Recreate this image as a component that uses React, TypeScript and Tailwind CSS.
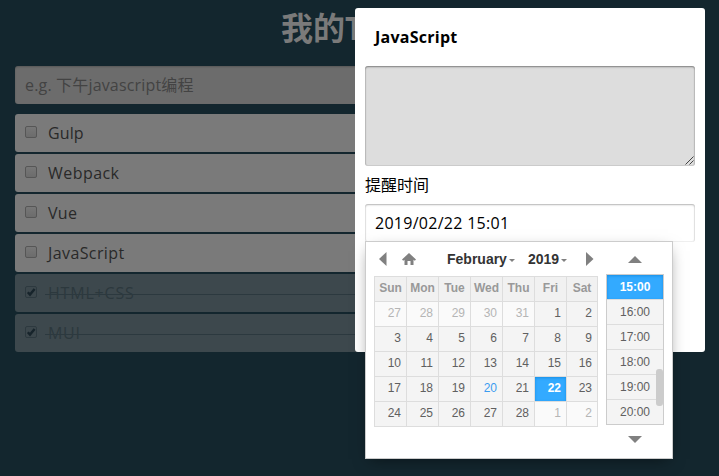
import React from "react";

const sans = "font-['Open_Sans','Noto_Sans_CJK_SC',sans-serif]";
const arial = "font-['Liberation_Sans',Arial,sans-serif]";

const todos = [
  { title: "Gulp", done: false, tracking: "tracking-[0.1px]" },
  { title: "Webpack", done: false, tracking: "tracking-[0.45px]" },
  { title: "Vue", done: false, tracking: "tracking-[0.3px]" },
  { title: "JavaScript", done: false, tracking: "tracking-[0.4px]" },
  { title: "HTML+CSS", done: true, tracking: "tracking-[0.8px]" },
  { title: "MUI", done: true, tracking: "tracking-[0.7px]" },
];

const weekdays = ["Sun", "Mon", "Tue", "Wed", "Thu", "Fri", "Sat"];
const days = [
  27, 28, 29, 30, 31, 1, 2, 3, 4, 5, 6, 7, 8, 9, 10, 11, 12, 13, 14, 15, 16,
  17, 18, 19, 20, 21, 22, 23, 24, 25, 26, 27, 28, 1, 2,
];
const times = ["15:00", "16:00", "17:00", "18:00", "19:00", "20:00"];

function Checkbox({ checked }: { checked: boolean }) {
  return (
    <span
      className={`block size-3 shrink-0 rounded-[2px] border ${
        checked
          ? "border-[#2d393f] bg-[#3c474c]"
          : "border-[#565656] bg-linear-to-b from-[#777] to-[#6c6c6c]"
      }`}
    >
      {checked && (
        <svg viewBox="0 0 10 10" className="block size-[10px]">
          <path d="M1.8 5.2 4 7.6 8.6 2" fill="none" stroke="#17242b" strokeWidth="2.4" />
        </svg>
      )}
    </span>
  );
}

function TodoRow({ title, done, tracking }: { title: string; done: boolean; tracking: string }) {
  return (
    <li
      className={`flex h-[38px] items-center rounded-[3px] pl-[10px] ${
        done ? "bg-[#3d484d] text-[#2c383d]" : "bg-[#7a7a7a] text-[#292929]"
      }`}
    >
      <div className="-mt-[2px]">
        <Checkbox checked={done} />
      </div>
      <div className={`relative ml-2 flex-1 pl-[3px] text-[16px] leading-[38px] ${tracking}`}>
        {title}
        {done && <span className="absolute top-[20px] left-0 h-px w-full bg-[#2c393f]" />}
      </div>
    </li>
  );
}

function dayStyle(index: number) {
  if (index === 26)
    return "bg-[#33aaff] font-bold text-white shadow-[inset_0_1px_3px_#178fe5]";
  if (index < 5 || index > 32) return "bg-[#fafafa] text-[#b5b5b5]";
  if (index === 24) return "bg-[#f5f5f5] text-[#3b9cf0]";
  return "bg-[#f4f4f4] text-[#606060]";
}

function DatePicker() {
  return (
    <div
      className={`absolute top-[233px] left-[10px] flex h-[218px] w-[308px] border border-[#ccc] bg-white pl-2 shadow-[0_5px_15px_-5px_rgba(0,0,0,0.5)] ${arial}`}
    >
      <div className="w-[224px]">
        <div className="flex h-[34px] items-center text-[14px] font-bold text-[#333]">
          <svg width="8" height="14" viewBox="0 0 8 14" className="ml-[5px] shrink-0">
            <path d="M7.5 0v14L0 7z" fill="#808080" />
          </svg>
          <svg width="14" height="12" viewBox="0 0 14 12" className="ml-[15px] shrink-0">
            <path d="M7 0 0 6.5 1.2 7.8 2.5 6.7V12H5.5V8H8.5V12H11.5V6.7L12.8 7.8 14 6.5z" fill="#808080" />
          </svg>
          <div className="ml-[31px] flex w-[68px] items-center justify-between">
            February
            <svg width="6" height="3" viewBox="0 0 6 3" className="mt-[3px] shrink-0">
              <path d="M0 0h6L3 3z" fill="#808080" />
            </svg>
          </div>
          <div className="ml-[13px] flex w-[39px] items-center justify-between">
            2019
            <svg width="6" height="3" viewBox="0 0 6 3" className="mt-[3px] shrink-0">
              <path d="M0 0h6L3 3z" fill="#808080" />
            </svg>
          </div>
          <svg width="8" height="14" viewBox="0 0 8 14" className="ml-[19px] shrink-0">
            <path d="M0 0v14l7.5-7z" fill="#808080" />
          </svg>
        </div>
        <div className="grid grid-cols-[repeat(6,32px)_31px] border-r border-b border-[#ddd] text-[12px]">
          {weekdays.map((day) => (
            <div
              key={day}
              className="h-[25px] border-t border-l border-[#ddd] bg-[#f1f1f1] text-center leading-[22px] font-bold text-[#999]"
            >
              {day}
            </div>
          ))}
          {days.map((day, i) => (
            <div
              key={i}
              className={`h-[25px] border-t border-l border-[#ddd] pr-[5px] text-right leading-[22px] ${dayStyle(i)}`}
            >
              {day}
            </div>
          ))}
        </div>
      </div>
      <div className="ml-2 flex w-[58px] flex-col items-center">
        <svg width="14" height="7" viewBox="0 0 14 7" className="mt-[14px] shrink-0">
          <path d="M0 7h14L7 0z" fill="#808080" />
        </svg>
        <div className="relative mt-[11px] h-[151px] w-full overflow-hidden border border-[#ccc] text-center text-[12px]">
          {times.map((time, i) => (
            <div
              key={time}
              className={`h-[25px] border-b border-[#ddd] leading-[25px] ${
                i === 0
                  ? "bg-[#33aaff] font-bold text-white shadow-[inset_0_1px_3px_#178fe5]"
                  : "bg-[#f4f4f4] text-[#606060]"
              }`}
            >
              {time}
            </div>
          ))}
          <span className="absolute top-[94px] right-0 h-[37px] w-[7px] rounded-[3px] bg-[#ccc]" />
        </div>
        <svg width="14" height="7" viewBox="0 0 14 7" className="mt-[11px] shrink-0">
          <path d="M0 0h14L7 7z" fill="#808080" />
        </svg>
      </div>
    </div>
  );
}

function TaskDialog() {
  return (
    <div className="absolute top-2 left-[355px] h-[344px] w-[350px] rounded-[3px] bg-white px-[10px] text-[16px] text-black">
      <h2 className="h-[58px] pl-[10px] text-[16px] leading-[58px] font-bold tracking-[0.25px]">
        JavaScript
      </h2>
      <div className="flex h-[100px] items-end justify-end rounded-[3px] bg-[#ddd] p-[1px] shadow-[inset_0_1px_2px_rgba(0,0,0,0.4),inset_0_0_0_1px_rgba(0,0,0,0.06)]">
        <svg width="9" height="9" viewBox="0 0 9 9">
          <path d="M.5 8.5 8.5.5M4.5 8.5l4-4" stroke="#444" strokeWidth="1" />
        </svg>
      </div>
      <div className="h-[38px] leading-[38px]">提醒时间</div>
      <div className="h-[38px] rounded-[3px] pl-[10px] leading-[38px] tracking-[0.28px] shadow-[inset_0_1px_2px_rgba(0,0,0,0.25),inset_0_0_0_1px_rgba(0,0,0,0.05)]">
        2019/02/22 15:01
      </div>
      <DatePicker />
    </div>
  );
}

export default function App() {
  return (
    <div className={`relative h-[476px] w-[719px] overflow-hidden bg-[#13262e] px-[15px] ${sans}`}>
      <h1 className="h-[66px] pl-[266px] text-[32px] leading-[56px] font-bold whitespace-nowrap text-[#7a7a7a]">
        我的Todo
      </h1>
      <div className="h-[38px] rounded-[3px] bg-[#6c6c6c] pl-[10px] text-[16px] leading-[38px] tracking-[0.17px] text-[#434343] shadow-[inset_0_1px_2px_rgba(0,0,0,0.2)]">
        e.g. 下午javascript编程
      </div>
      <ul className="mt-[10px] flex flex-col gap-[2px]">
        {todos.map((todo) => (
          <TodoRow key={todo.title} {...todo} />
        ))}
      </ul>
      <TaskDialog />
    </div>
  );
}
